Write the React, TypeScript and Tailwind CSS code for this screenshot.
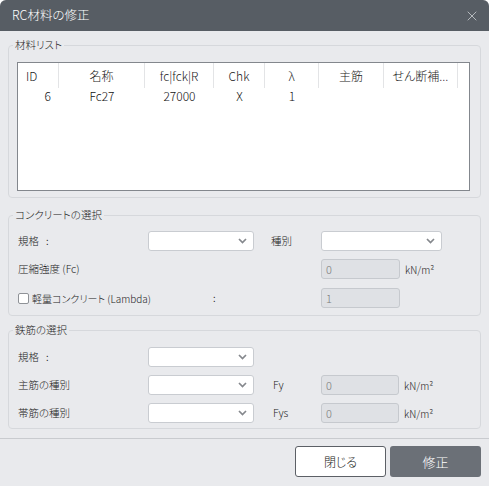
import React from 'react';
import { X } from 'lucide-react';

const cols = [
  { key: 'id', label: 'ID', w: 'w-[41px]', head: 'text-left pl-[8px]', cell: 'text-right pr-[8px]' },
  { key: 'name', label: '名称', w: 'w-[86px]', head: 'text-center', cell: 'text-center' },
  { key: 'fc', label: 'fc|fck|R', w: 'w-[69px]', head: 'text-center', cell: 'text-center' },
  { key: 'chk', label: 'Chk', w: 'w-[51px]', head: 'text-center', cell: 'text-center' },
  { key: 'lambda', label: 'λ', w: 'w-[54px]', head: 'text-center', cell: 'text-center' },
  { key: 'main', label: '主筋', w: 'w-[65px]', head: 'text-center', cell: 'text-center' },
  { key: 'shear', label: 'せん断補...', w: 'w-[74px]', head: 'text-center', cell: 'text-center' },
];

const rows: Record<string, string>[] = [
  { id: '6', name: 'Fc27', fc: '27000', chk: 'X', lambda: '1', main: '', shear: '' },
];

function Select({ w }: { w: string }) {
  return (
    <div className={`${w} h-[20px] bg-white border border-[#c9ccd1] rounded-[3px] flex items-center justify-end pr-[6px] shrink-0`}>
      <svg width="9" height="6" viewBox="0 0 9 6">
        <path d="M1 1l3.5 3.5L8 1" stroke="#85888d" strokeWidth="1.7" fill="none" />
      </svg>
    </div>
  );
}

function ReadOnly({ value, w = 'w-[79px]' }: { value: string; w?: string }) {
  return (
    <div className={`${w} h-[20px] bg-[#dfe1e5] border border-[#c6c9ce] rounded-[3px] flex items-center pl-[4px] text-[11px] text-[#7a7a7a] shrink-0`}>
      {value}
    </div>
  );
}

function Unit() {
  return <span className="ml-[5px] text-[10px] text-[#222]">kN/m²</span>;
}

function Spec() {
  return (
    <span className="w-[130px] shrink-0">
      規格<span className="ml-[7px]">:</span>
    </span>
  );
}

export default function App() {
  return (
    <div className="w-[489px] h-[486px] bg-[#e9eaed] rounded-t-[6px] overflow-hidden flex flex-col font-['Noto_Sans_CJK_JP','Noto_Sans',sans-serif] font-light [font-feature-settings:'palt'] text-[#222]">
      <div className="h-[31px] bg-[#575d64] flex items-center justify-between pl-[12px] pr-[9px] shrink-0">
        <span className="text-white text-[12.5px]">RC材料の修正</span>
        <X size={16} strokeWidth={1.1} className="text-[#d9dbde]" />
      </div>

      <fieldset className="mt-[6px] mx-[8px] px-[4px] h-[161px] border border-[#d6d8dc] rounded-[4px]">
        <legend className="px-[2px] text-[10.5px] leading-[16px]">材料リスト</legend>
        <div className="ml-[4px] mt-[9px] w-[453px] h-[129px] bg-white border border-[#83878d]">
          <div className="flex h-[25px] items-center text-[12px] text-[#1a1a1a]">
            {cols.map((c) => (
              <div key={c.key} className={`${c.w} ${c.head} h-full leading-[25px] border-r border-[#e3e4e6] shrink-0 truncate`}>
                {c.label}
              </div>
            ))}
          </div>
          {rows.map((r, i) => (
            <div key={i} className="flex h-[16px] items-center text-[12px] text-[#111]">
              {cols.map((c) => (
                <div key={c.key} className={`${c.w} ${c.cell} shrink-0`}>{r[c.key]}</div>
              ))}
            </div>
          ))}
        </div>
      </fieldset>

      <fieldset className="mt-[9px] mx-[8px] px-[4px] h-[109px] border border-[#d6d8dc] rounded-[4px]">
        <legend className="px-[2px] text-[10.5px] leading-[16px]">コンクリートの選択</legend>
        <div className="pl-[5px] pt-[8px] flex flex-col gap-[8px] text-[10.5px]">
          <div className="flex items-center h-[20px]">
            <Spec />
            <Select w="w-[106px]" />
            <span className="ml-[17px] w-[50px] shrink-0">種別</span>
            <Select w="w-[121px]" />
          </div>
          <div className="flex items-center h-[20px]">
            <span className="w-[303px] shrink-0">圧縮強度 (Fc)</span>
            <ReadOnly value="0" />
            <Unit />
          </div>
          <div className="flex items-center h-[20px] mt-[1px]">
            <span className="w-[11px] h-[11px] bg-white border border-[#8f9297] rounded-[2px] shrink-0" />
            <span className="ml-[3px] w-[181px] shrink-0 text-[10px]">軽量コンクリート (Lambda)</span>
            <span className="w-[108px] shrink-0">:</span>
            <ReadOnly value="1" />
          </div>
        </div>
      </fieldset>

      <fieldset className="mt-[6px] mx-[8px] px-[4px] h-[107px] border border-[#d6d8dc] rounded-[4px]">
        <legend className="px-[2px] text-[10.5px] leading-[16px]">鉄筋の選択</legend>
        <div className="pl-[5px] pt-[9px] flex flex-col gap-[8px] text-[10.5px]">
          <div className="flex items-center h-[20px]">
            <Spec />
            <Select w="w-[106px]" />
          </div>
          <div className="flex items-center h-[20px]">
            <span className="w-[130px] shrink-0">主筋の種別</span>
            <Select w="w-[106px]" />
            <span className="ml-[19px] w-[48px] shrink-0">Fy</span>
            <ReadOnly value="0" w="w-[78px]" />
            <Unit />
          </div>
          <div className="flex items-center h-[20px]">
            <span className="w-[130px] shrink-0">帯筋の種別</span>
            <Select w="w-[106px]" />
            <span className="ml-[19px] w-[48px] shrink-0">Fys</span>
            <ReadOnly value="0" w="w-[78px]" />
            <Unit />
          </div>
        </div>
      </fieldset>

      <div className="mt-[9px] border-t border-[#c9cbcf] flex justify-end gap-[4px] pt-[7px] pr-[8px]">
        <button className="w-[91px] h-[31px] bg-white border border-[#5c6066] rounded-[3px] text-[12px] text-[#222]">閉じる</button>
        <button className="w-[91px] h-[31px] bg-[#6b7077] rounded-[3px] text-[13px] text-white">修正</button>
      </div>
    </div>
  );
}
